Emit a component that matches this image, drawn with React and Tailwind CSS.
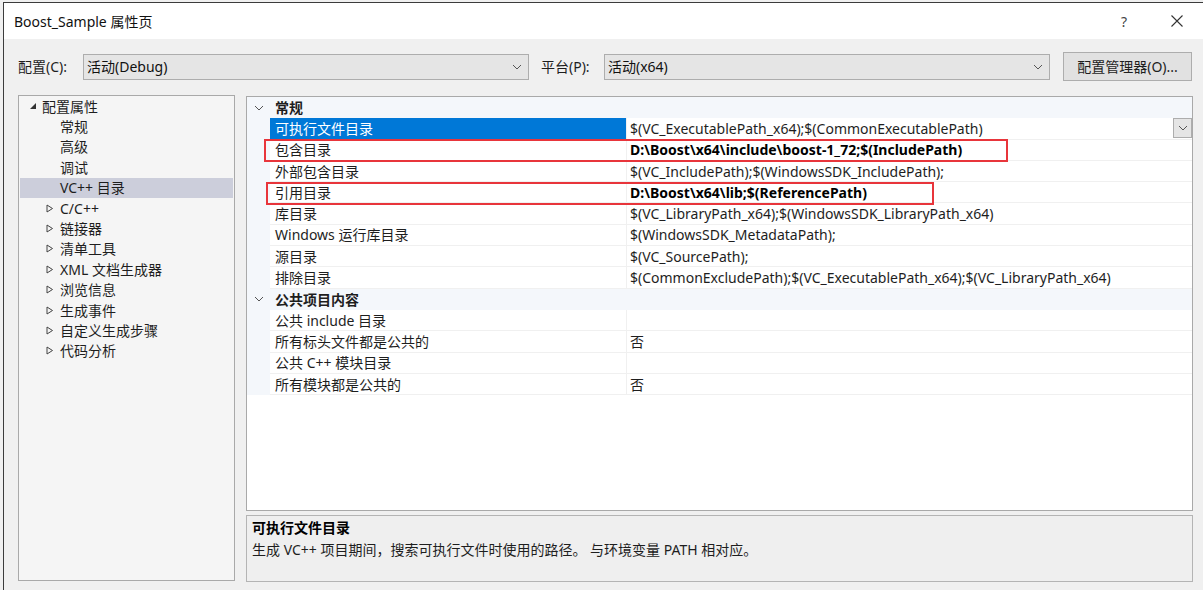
import React from "react";

const F = { fontFamily: '"Noto Sans", "Noto Sans CJK SC", sans-serif' };

function Chevron({ className = "" }) {
  return (
    <svg width="10" height="6" viewBox="0 0 10 6" className={className}>
      <path d="M1 1 L5 5 L9 1" fill="none" stroke="#555" strokeWidth="1" />
    </svg>
  );
}

function Combo({ text, className = "" }) {
  return (
    <div className={"h-[26px] bg-[#e5e5e5] border border-[#adadad] flex items-center pl-[3px] pr-[6px] " + className}>
      <span className="flex-1 text-[14px] text-[#111]">{text}</span>
      <Chevron />
    </div>
  );
}

const tree = [
  { t: "常规", indent: true },
  { t: "高级", indent: true },
  { t: "调试", indent: true },
  { t: "VC++ 目录", indent: true, sel: true },
  { t: "C/C++" },
  { t: "链接器" },
  { t: "清单工具" },
  { t: "XML 文档生成器" },
  { t: "浏览信息" },
  { t: "生成事件" },
  { t: "自定义生成步骤" },
  { t: "代码分析" },
];

const rows = [
  { cat: "常规" },
  { n: "可执行文件目录", v: "$(VC_ExecutablePath_x64);$(CommonExecutablePath)", sel: true },
  { n: "包含目录", v: "D:\\Boost\\x64\\include\\boost-1_72;$(IncludePath)", bold: true },
  { n: "外部包含目录", v: "$(VC_IncludePath);$(WindowsSDK_IncludePath);" },
  { n: "引用目录", v: "D:\\Boost\\x64\\lib;$(ReferencePath)", bold: true },
  { n: "库目录", v: "$(VC_LibraryPath_x64);$(WindowsSDK_LibraryPath_x64)" },
  { n: "Windows 运行库目录", v: "$(WindowsSDK_MetadataPath);" },
  { n: "源目录", v: "$(VC_SourcePath);" },
  { n: "排除目录", v: "$(CommonExcludePath);$(VC_ExecutablePath_x64);$(VC_LibraryPath_x64)" },
  { cat: "公共项目内容" },
  { n: "公共 include 目录", v: "" },
  { n: "所有标头文件都是公共的", v: "否" },
  { n: "公共 C++ 模块目录", v: "" },
  { n: "所有模块都是公共的", v: "否" },
];

export default function App() {
  return (
    <div style={F} className="w-[1203px] h-[590px] bg-[#f0f0f0] overflow-hidden text-[#1e1e1e] text-[14px] pl-[3px] pt-[2px]">
      <div className="w-full h-full border-l border-t border-[#3c3c3c] flex flex-col">
        {/* title bar */}
        <div className="h-[36px] bg-white flex items-center pl-[10px] shrink-0">
          <span className="text-[14px] text-[#111] flex-1">Boost_Sample 属性页</span>
          <span className="text-[14px] text-[#444] w-[12px] mr-[38px]">?</span>
          <svg width="12" height="12" viewBox="0 0 12 12" className="mr-[20px]">
            <path d="M0.5 0.5 L11.5 11.5 M11.5 0.5 L0.5 11.5" stroke="#333" strokeWidth="1.1" />
          </svg>
        </div>
        {/* config row */}
        <div className="flex items-center h-[29px] mt-[13px] pl-[14px] shrink-0">
          <span className="w-[65px]">配置(C):</span>
          <Combo text="活动(Debug)" className="w-[446px]" />
          <span className="ml-[12px] w-[63px]">平台(P):</span>
          <Combo text="活动(x64)" className="w-[446px]" />
          <div className="ml-[13px] w-[129px] h-[29px] bg-[#e1e1e1] border border-[#adadad] flex items-center justify-center">
            配置管理器(O)...
          </div>
        </div>
        {/* main area */}
        <div className="flex mt-[14px] pl-[14px]">
          {/* tree */}
          <div className="w-[217px] h-[486px] bg-[#f5f5f5] border border-[#a9a9a9] px-[1px]">
            <div className="h-[20.4px] flex items-center">
              <svg width="8" height="8" viewBox="0 0 8 8" className="ml-[9px] mr-[5px]">
                <path d="M7 1 L7 7 L1 7 Z" fill="#333" />
              </svg>
              <span>配置属性</span>
            </div>
            {tree.map((it, i) => (
              <div
                key={i}
                className={"h-[20.4px] flex items-center " + (it.sel ? "bg-[#cccedb]" : "")}
              >
                {it.indent ? (
                  <span className="ml-[40px]">{it.t}</span>
                ) : (
                  <>
                    <svg width="8" height="9" viewBox="0 0 8 9" className="ml-[26px] mr-[6px]">
                      <path d="M1 1 L6.5 4.5 L1 8 Z" fill="none" stroke="#444" strokeWidth="1" />
                    </svg>
                    <span>{it.t}</span>
                  </>
                )}
              </div>
            ))}
          </div>
          {/* right side */}
          <div className="ml-[11px] w-[947px] flex flex-col">
            <div className="relative h-[415px] bg-white border border-[#a9a9a9] mt-[1px]">
              {rows.map((r, i) =>
                r.cat ? (
                  <div key={i} className="h-[21.3px] bg-[#f4f7fb] flex items-center">
                    <div className="w-[23px] flex justify-center">
                      <Chevron />
                    </div>
                    <span className="font-bold ml-[5px]">{r.cat}</span>
                  </div>
                ) : (
                  <div key={i} className="h-[21.3px] flex">
                    <div className="w-[23px] bg-[#f4f7fb]" />
                    <div
                      className={
                        "w-[357px] flex items-center pl-[5px] border-r border-[#f0f0f0] whitespace-nowrap " +
                        (r.sel ? "bg-[#0078d7] text-white" : "border-b border-b-[#f0f0f0]")
                      }
                    >
                      {r.n}
                    </div>
                    <div className="flex-1 flex items-center pl-[3px] border-b border-[#f0f0f0] relative whitespace-nowrap">
                      <span className={r.bold ? "font-bold text-black" : ""}>{r.v}</span>
                      {r.sel && (
                        <div className="absolute right-0 top-0 w-[19px] h-[20px] bg-[#e5e5e5] border border-[#adadad] flex items-center justify-center">
                          <Chevron />
                        </div>
                      )}
                    </div>
                  </div>
                )
              )}
              {/* red highlight boxes */}
              <div className="absolute left-[17px] top-[42px] w-[744px] h-[23px] border-2 border-[#e8353b]" />
              <div className="absolute left-[19px] top-[85px] w-[668px] h-[23px] border-2 border-[#e8353b]" />
            </div>
            <div className="mt-[4px] h-[67px] bg-[#efefef] border border-[#b4b4b4] pl-[5px] pt-[1px]">
              <div className="font-bold h-[21px] flex items-center text-black">可执行文件目录</div>
              <div className="h-[22px] flex items-center whitespace-nowrap">生成 VC++ 项目期间，搜索可执行文件时使用的路径。 与环境变量 PATH 相对应。</div>
            </div>
          </div>
        </div>
      </div>
    </div>
  );
}
